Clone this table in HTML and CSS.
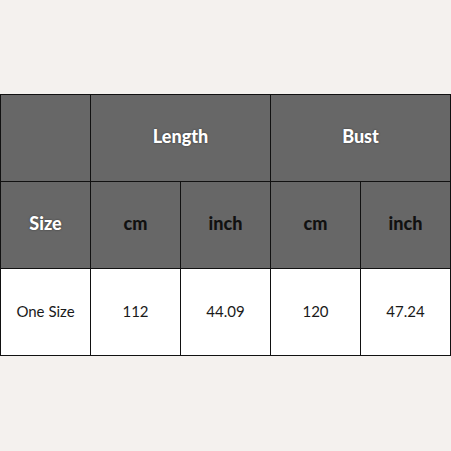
FILE: index.html
```html
<!DOCTYPE html>
<html>
<head>
<meta charset="utf-8">
<link rel="stylesheet" href="styles.css">
</head>
<body>
<div class="page">
  <table class="size-table">
    <colgroup>
      <col class="col">
      <col class="col">
      <col class="col">
      <col class="col">
      <col class="col">
    </colgroup>
    <tr class="row head">
      <td class="cell"></td>
      <td class="cell title" colspan="2">Length</td>
      <td class="cell title" colspan="2">Bust</td>
    </tr>
    <tr class="row head">
      <td class="cell title">Size</td>
      <td class="cell unit">cm</td>
      <td class="cell unit">inch</td>
      <td class="cell unit">cm</td>
      <td class="cell unit">inch</td>
    </tr>
    <tr class="row data">
      <td class="cell">One Size</td>
      <td class="cell">112</td>
      <td class="cell">44.09</td>
      <td class="cell">120</td>
      <td class="cell">47.24</td>
    </tr>
  </table>
</div>
</body>
</html>
```
FILE: styles.css
```css
html, body {
  margin: 0;
  padding: 0;
  background: #f4f1ee;
}
.page {
  width: 451px;
  height: 451px;
  padding-top: 94px;
  box-sizing: border-box;
}
.size-table {
  border-collapse: collapse;
  width: 451px;
  table-layout: fixed;
  font-family: Lato, "Open Sans", sans-serif;
}
.col {
  width: 90px;
}
.cell {
  border: 1px solid #111;
  padding: 0;
  text-align: center;
  vertical-align: middle;
}
.row {
  height: 87px;
}
.head .cell {
  background: #676767;
  padding-bottom: 4px;
}
.title {
  color: #fff;
  font-weight: 900;
  font-size: 18px;
  text-shadow: 0 0 2px rgba(0,0,0,0.5);
}
.unit {
  color: #111;
  font-weight: 900;
  font-size: 18px;
}
.data .cell {
  background: #fff;
  color: #1a1a1a;
  font-size: 15px;
  padding-bottom: 2px;
}
```
